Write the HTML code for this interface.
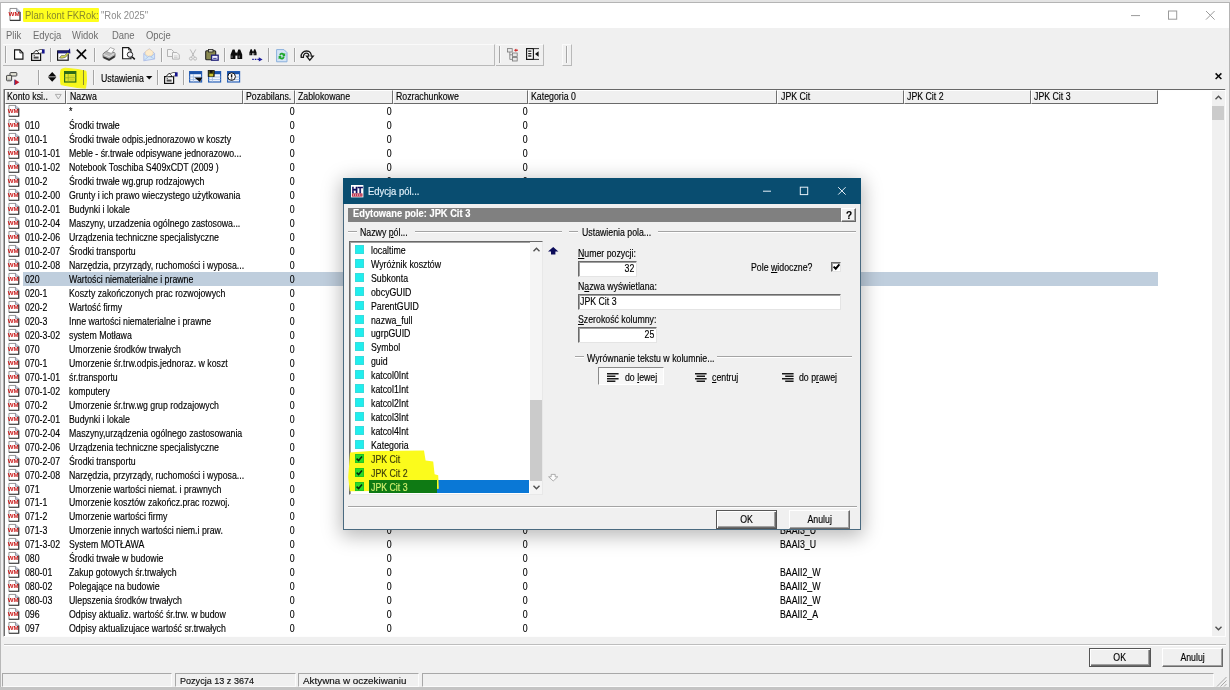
<!DOCTYPE html>
<html lang="pl"><head><meta charset="utf-8"><title>Plan kont FKRok: "Rok 2025"</title>
<style>
html,body{margin:0;padding:0}
body{width:1230px;height:690px;overflow:hidden;position:relative;background:#f0f0f0;font-family:"Liberation Sans",sans-serif;color:#111}
.b{position:absolute;box-sizing:border-box}
.t,.s,.m,.d{position:absolute;white-space:nowrap;height:14px;line-height:14px;transform-origin:0 50%}
.t{font-size:10.2px;transform:scaleX(.86);color:#000;-webkit-text-stroke:.15px currentColor}
.s{font-size:9.8px;transform:scaleX(.95);color:#111;-webkit-text-stroke:.15px currentColor}
.m{font-size:10px;transform:scaleX(.945);color:#6d6d6d}
.d{font-size:10.2px;transform:scaleX(.85)}
.r{transform-origin:100% 50%}
u{text-decoration:underline;text-underline-offset:1px}
svg{position:absolute;overflow:visible}
.sep{position:absolute;width:1px;background:#a6a6a6;box-shadow:1px 0 0 #f9f9f9}
</style></head><body><div id="root" style="position:absolute;left:0;top:0;width:1230px;height:690px;overflow:hidden;will-change:transform">

<div class="b" style="left:0.0px;top:0.0px;width:1230.0px;height:3.0px;background:#e4e4e4;border-bottom:1px solid #b4b4b4"></div>
<div class="b" style="left:0.0px;top:3.0px;width:1230.0px;height:25.0px;background:#fff"></div>
<div class="b" style="left:0.0px;top:2.0px;width:1.3px;height:688.0px;background:#b8b8b8"></div>
<div class="b" style="left:1228.8px;top:2.0px;width:1.2px;height:688.0px;background:#b4b4b4"></div>
<div class="b" style="left:0.0px;top:687.2px;width:1230.0px;height:2.8px;background:#c4c4c4"></div>
<svg style="left:8.5px;top:8px" width="11.5" height="13" viewBox="0 0 12 14" preserveAspectRatio="none"><path d="M1 .5h7l3.500 3.500v9.500h-10.500z" fill="#fff" stroke="#6a6a6a" stroke-width=".8"/><path d="M1 13.300h10.500v-9" fill="none" stroke="#3a3a3a" stroke-width="1.200"/><path d="M8 .5v3.500h3.500" fill="#c8d4e4" stroke="#667" stroke-width=".7"/><text x="5.400" y="9" font-family="Liberation Sans,sans-serif" font-weight="bold" font-size="6.200" fill="#c81414" text-anchor="middle" textLength="11.600" lengthAdjust="spacingAndGlyphs">WM</text></svg>
<div class="b" style="left:23.0px;top:8.0px;width:76.0px;height:14.0px;background:#ffff1e;border-radius:1px"></div>
<div class="m" style="left:25.0px;top:9.2px;color:#8a8a2a">Plan kont FKRok:</div>
<div class="m" style="left:101.0px;top:9.2px;color:#8c8c8c">&quot;Rok 2025&quot;</div>
<svg style="left:1125px;top:6px" width="100" height="18" viewBox="0 0 100 18"><g stroke="#9a9a9a" stroke-width="1" fill="none"><path d="M6 9.6h9"/><rect x="43.5" y="5" width="8.2" height="8.2"/><path d="M81 5l8.6 8.6M89.6 5l-8.6 8.6"/></g></svg>
<div class="m" style="left:6.0px;top:29.2px;">Plik</div>
<div class="m" style="left:33.0px;top:29.2px;">Edycja</div>
<div class="m" style="left:72.0px;top:29.2px;">Widok</div>
<div class="m" style="left:112.0px;top:29.2px;">Dane</div>
<div class="m" style="left:145.5px;top:29.2px;">Opcje</div>
<div class="b" style="left:3.0px;top:44.0px;width:491.5px;height:22.0px;border-top:1px solid #fafafa;border-bottom:1px solid #b9b9b9;border-right:1px solid #b9b9b9"></div>
<div class="b" style="left:495.5px;top:44.0px;width:48.0px;height:22.0px;border-top:1px solid #fafafa;border-bottom:1px solid #b9b9b9;border-right:1px solid #b9b9b9"></div>
<div class="sep" style="left:5.0px;top:46px;height:17px"></div>
<div class="sep" style="left:499.0px;top:46px;height:17px"></div>
<div class="sep" style="left:566.0px;top:46px;height:17px"></div>
<div class="b" style="left:562.0px;top:44.0px;width:10.4px;height:22.0px;border-top:1px solid #fafafa;border-left:1px solid #fafafa;border-bottom:1px solid #b9b9b9;border-right:1px solid #b9b9b9"></div>
<div class="sep" style="left:50.0px;top:48px;height:14px"></div>
<div class="sep" style="left:94.0px;top:48px;height:14px"></div>
<div class="sep" style="left:161.0px;top:48px;height:14px"></div>
<div class="sep" style="left:224.0px;top:48px;height:14px"></div>
<div class="sep" style="left:268.3px;top:48px;height:14px"></div>
<div class="sep" style="left:294.0px;top:48px;height:14px"></div>
<svg style="left:14.0px;top:49.0px" width="9.5" height="11" viewBox="0 0 10 11"><path d="M.6 .6h5.6l3.2 3.2v6.6h-8.8z" fill="#fff" stroke="#111" stroke-width="1.2"/><path d="M6.2 .6v3.2h3.2" fill="none" stroke="#111" stroke-width=".9"/></svg>
<svg style="left:31.0px;top:48.8px" width="14" height="12" viewBox="0 0 14 12"><rect x=".6" y="4.600" width="9" height="6.800" fill="#f6f6f6" stroke="#111" stroke-width="1.200"/><path d="M2 4.600l3.200-3.400 2.800 2.800" fill="#fff" stroke="#111" stroke-width="1"/><path d="M5.800 2l3.200-1.500h2.400v3.100l-2.800.9z" fill="#fff" stroke="#444" stroke-width=".8"/><rect x="11" y=".3" width="2.600" height="4.200" fill="#16168e"/><rect x="2.600" y="7.600" width="5" height="2" fill="#4a4a4a"/><rect x="2.600" y="6.200" width="1.400" height="1" fill="#4a4a4a"/></svg>
<svg style="left:57.0px;top:47.6px" width="13.5" height="13" viewBox="0 0 13.500 13"><rect x=".6" y="3" width="10.600" height="9.200" fill="#fff" stroke="#111" stroke-width="1.200"/><rect x=".6" y="2.600" width="10.600" height="2.800" fill="#1c1c76"/><path d="M2.400 10l2-2.600 3.200.2 3.400-3.600 1.200 1.200-3.800 4.200-3.200.8z" fill="#d2d850" stroke="#555" stroke-width=".6"/><path d="M9.800 4.200l3.200-4 .4 5.200z" fill="#16167a"/></svg>
<svg style="left:76.3px;top:49.3px" width="11" height="10.5" viewBox="0 0 11 10.5"><path d="M.8 .6l9.4 9.2M10 .6l-9.2 9.2" stroke="#0a0a0a" stroke-width="1.7" fill="none"/></svg>
<svg style="left:101.6px;top:47.2px" width="13.8" height="13.6" viewBox="0 0 14 14"><path d="M1 7.200c0-1 4.400-3.600 5.400-3.600l6.600 2.400c.6.400.6 4 0 4.600l-5 3c-.6.300-1 .3-1.600 0l-5-2.200c-.6-.400-.6-3.400-.4-4.200z" fill="#b8b8b8" stroke="#555" stroke-width=".7"/><path d="M4.800 5l3.600-4.400 4.400 1.600-3.200 4.400z" fill="#fff" stroke="#888" stroke-width=".7"/><path d="M1.200 9.600l6 2.600 5.800-3.600v2l-5 3c-.6.300-1 .3-1.600 0l-5-2.200z" fill="#2e2e2e"/><path d="M1.400 7.600l6 2.400 5.400-3.400" fill="none" stroke="#eee" stroke-width=".8"/></svg>
<svg style="left:122.0px;top:47.3px" width="13.4" height="13" viewBox="0 0 13.400 13"><path d="M.6 .6h6l2.400 2.400v8.800h-8.400z" fill="#fff" stroke="#1a1a1a" stroke-width="1.100"/><path d="M6.600 .6v2.400h2.400" fill="none" stroke="#1a1a1a" stroke-width=".8"/><circle cx="8" cy="7.600" r="2.700" fill="#f4f4f8" stroke="#222" stroke-width="1"/><path d="M10 9.700l2.800 2.700" stroke="#111" stroke-width="1.500"/></svg>
<svg style="left:142.8px;top:48.4px" width="12.4" height="13.2" viewBox="0 0 12.400 13.200"><path d="M.8 5.400l5.400-4.600 5.400 4.600v5.600l-10.800 1.800z" fill="#d4e8f8" stroke="#a8b8e4" stroke-width=".8"/><path d="M2.400 6.400v-2.800l3.800-2.600 3.800 2.600v2.800l-3.800 2.400z" fill="#fdeccc" stroke="#e8c8a0" stroke-width=".5"/><path d="M.8 12.600l5.400-4.600 5.400 3M.8 5.600l3.800 3.600M11.600 5.600l-3.600 3.400" fill="none" stroke="#a8c0e8" stroke-width=".8"/></svg>
<svg style="left:167.2px;top:49.2px" width="13" height="10.6" viewBox="0 0 13 10.6"><g fill="#f4f4f4" stroke="#b4b4b4" stroke-width="1"><path d="M.5 .5h4l2 2v5h-6z"/><path d="M5.5 3.5h4.4l2.4 2.4v4.2h-6.8z"/></g><path d="M7 7h3.6M7 8.6h3.6" stroke="#c4c4c4" stroke-width=".8"/></svg>
<svg style="left:188.8px;top:49.3px" width="8" height="11.6" viewBox="0 0 8 11.6"><g fill="none" stroke="#b9b9b9" stroke-width="1"><path d="M1.2 .4l4.4 8M6.8 .4l-4.4 8"/><circle cx="1.9" cy="9.6" r="1.5"/><circle cx="6.1" cy="9.6" r="1.5"/></g></svg>
<svg style="left:205.0px;top:49.2px" width="14.2" height="11.8" viewBox="0 0 14.2 11.8"><rect x=".7" y="1.8" width="10" height="9" rx="1" fill="#8a8a50" stroke="#222" stroke-width="1.1"/><rect x="3.4" y=".4" width="4.6" height="2.6" fill="#d8d8c0" stroke="#222" stroke-width=".8"/><rect x="6.600" y="6.200" width="6.600" height="5" fill="#eef" stroke="#22227a" stroke-width="1.300"/><path d="M8.200 9.400h3.400" stroke="#2a2a90" stroke-width=".9"/></svg>
<svg style="left:230.4px;top:49.3px" width="12.8" height="10.8" viewBox="0 0 12.8 10.8"><path d="M2.6 .6h2l.8 2.6v6.8h-4.8v-4.4zM8.2 .6h2l2 5v4.4h-4.8v-6.8z" fill="#0c0c0c"/><rect x="5" y="3.6" width="2.8" height="3" fill="#0c0c0c"/><path d="M2 6.6v2.4M9.2 6.6v2.4" stroke="#999" stroke-width=".8"/></svg>
<svg style="left:249.4px;top:49.3px" width="7.936" height="6.696000000000001" viewBox="0 0 12.8 10.8"><path d="M2.6 .6h2l.8 2.6v6.8h-4.8v-4.4zM8.2 .6h2l2 5v4.4h-4.8v-6.8z" fill="#0c0c0c"/><rect x="5" y="3.6" width="2.8" height="3" fill="#0c0c0c"/><path d="M2 6.6v2.4M9.2 6.6v2.4" stroke="#999" stroke-width=".8"/></svg>
<svg style="left:251.6px;top:56.6px" width="11" height="5" viewBox="0 0 11 5"><path d="M.2 2.4h7" stroke="#1a1a9a" stroke-width="1.1" stroke-dasharray="1.6 1"/><path d="M6.8 .2l3.8 2.2-3.8 2.2z" fill="#1a1a9a"/></svg>
<svg style="left:275.6px;top:48.8px" width="11.6" height="13.4" viewBox="0 0 11.6 13.4"><path d="M.6 .6h7.4l3 3v9.2h-10.4z" fill="#d4e4f6" stroke="#8ab0dc" stroke-width="1"/><path d="M3.2 6.2a2.8 2.8 0 0 1 5-1.4l1-.8v3.2h-3.2l1-1a1.5 1.5 0 0 0-2.4.4zM8.6 8a2.8 2.8 0 0 1-5 1.400l-1 .8v-3.200h3.200l-1 1a1.500 1.500 0 0 0 2.400-.4z" fill="#1ea82e"/></svg>
<svg style="left:299.8px;top:49.8px" width="14" height="10.8" viewBox="0 0 14 10.8"><path d="M1.200 7.400c-.600-4 2.200-6.400 5.400-6.400 3.400 0 5 2.600 4.600 5.200h2l-3.400 4-3.200-4h2.200c.4-1.600-.6-3-2.400-3-2 0-3.200 1.600-3 4.200z" fill="#fff" stroke="#1a1a1a" stroke-width="1.300"/></svg>
<svg style="left:506.8px;top:47.6px" width="11.4" height="13.6" viewBox="0 0 11.4 13.6"><g fill="#e8e8e8" stroke="#777" stroke-width=".8"><rect x=".6" y=".6" width="4.600" height="3.400"/><rect x="5.400" y="5" width="4.800" height="3.400"/><rect x="5.400" y="9.600" width="4.800" height="3.400"/></g><path d="M2.800 4v7.400h2.600M2.800 6.800h2.600" fill="none" stroke="#777" stroke-width=".8"/><path d="M7 2.200l2.200-1.600v1h1.600v1.400h-1.600v1z" fill="#d03030"/></svg>
<svg style="left:525.6px;top:48.4px" width="13.6" height="12" viewBox="0 0 13.600 12"><rect x=".6" y=".6" width="6.800" height="10.800" fill="#fff" stroke="#1a1a1a" stroke-width="1.200"/><path d="M7.400 .6h5.600M7.400 11.400h5.600" stroke="#333" stroke-width="1"/><path d="M2.200 3.200h3.200M2.200 5.600h3.200M2.200 8h3.200" stroke="#222" stroke-width="1.300"/><path d="M12.600 3.200l-3.600 2.800 3.600 2.800z" fill="#111"/></svg>
<div class="sep" style="left:38.4px;top:70px;height:15px"></div>
<div class="sep" style="left:83.2px;top:70px;height:15px"></div>
<div class="sep" style="left:92.8px;top:70px;height:15px"></div>
<div class="sep" style="left:157.4px;top:70px;height:15px"></div>
<div class="sep" style="left:183.2px;top:70px;height:15px"></div>
<svg style="left:58px;top:66px" width="32" height="24" viewBox="58 66 32 24"><path d="M61 69.500L65 68.200 77 69.400 86 71.200 86.500 80 85.600 88.200 78 87.600 66 85.600 61 84.600 60.200 76z" fill="#f6f61a" stroke="#f6f61a" stroke-width="1" stroke-linejoin="round"/></svg>
<div class="b" style="left:83.2px;top:70px;width:1px;height:15px;background:#8a8a30"></div>
<svg style="left:6.0px;top:71.6px" width="14" height="13" viewBox="0 0 14 13"><g fill="#e4e4d8" stroke="#444" stroke-width="1"><rect x="4" y=".6" width="6.800" height="3.400" rx=".6"/><rect x=".6" y="3.400" width="5" height="5.400" rx=".6"/><rect x="1.400" y="6.600" width="3.400" height="1.400" fill="#bbb" stroke="none"/></g><path d="M9 7.600l4.400 2.700-4.400 2.700z" fill="#c01830"/><path d="M8.600 7.600v5.400" stroke="#2a2a7a" stroke-width=".8"/></svg>
<svg style="left:47.5px;top:71.8px" width="8.4" height="9.8" viewBox="0 0 8.400 9.800"><path d="M4.200 0l4.200 4.500h-8.400zM0 5.300h8.400l-4.200 4.500z" fill="#0a0a0a"/></svg>
<svg style="left:64.0px;top:71.4px" width="12.4" height="11.6" viewBox="0 0 12.400 11.600"><rect x=".6" y=".6" width="11.200" height="10.400" fill="#e4e82c" stroke="#2a6a18" stroke-width="1.200"/><rect x=".6" y=".6" width="11.200" height="2.400" fill="#2a6a18"/><path d="M.6 6.800h11.200M4.200 3v8" stroke="#8aa424" stroke-width=".7"/><path d="M5.400 5h5M5.400 8.900h5" stroke="#bcc82c" stroke-width="1.200"/></svg>
<div class="t" style="left:101.4px;top:71.7px;">Ustawienia</div>
<svg style="left:146.0px;top:76.2px" width="6.4" height="3.6" viewBox="0 0 6.400 3.600"><path d="M0 0h6.400l-3.200 3.600z" fill="#0a0a0a"/></svg>
<svg style="left:164.0px;top:71.6px" width="14" height="12" viewBox="0 0 14 12"><rect x=".6" y="4.600" width="9" height="6.800" fill="#f6f6f6" stroke="#111" stroke-width="1.200"/><path d="M2 4.600l3.200-3.400 2.800 2.800" fill="#fff" stroke="#111" stroke-width="1"/><path d="M5.800 2l3.200-1.500h2.400v3.100l-2.800.9z" fill="#fff" stroke="#444" stroke-width=".8"/><rect x="11" y=".3" width="2.600" height="4.200" fill="#16168e"/><rect x="2.600" y="7.600" width="5" height="2" fill="#4a4a4a"/><rect x="2.600" y="6.200" width="1.400" height="1" fill="#4a4a4a"/></svg>
<svg style="left:189.4px;top:71.2px" width="13.2" height="11.6" viewBox="0 0 13.200 11.600"><rect x=".6" y=".6" width="12" height="10.400" fill="#f2f6fc" stroke="#2a62b8" stroke-width="1.200"/><rect x=".6" y=".6" width="12" height="2.600" fill="#1a52a8"/><path d="M.6 6h12M.6 8.600h12M4.400 3.200v7.800" stroke="#9ab8e0" stroke-width=".8"/><path d="M5.400 6.400h7.800l-2.200 4.600z" fill="#0a0a0a"/></svg>
<svg style="left:208.2px;top:71.2px" width="13.2" height="11.6" viewBox="0 0 13.200 11.600"><rect x=".6" y=".6" width="12" height="10.400" fill="#f2f6fc" stroke="#2a62b8" stroke-width="1.200"/><rect x=".6" y=".6" width="12" height="2.600" fill="#1a52a8"/><path d="M.6 6h12M.6 8.600h12M4.400 3.200v7.800" stroke="#9ab8e0" stroke-width=".8"/><rect x=".2" y="-.6" width="6" height="6" fill="#5a5a10" stroke="#111" stroke-width=".8"/><rect x="1.800" y="-.6" width="2.800" height="2.400" fill="#111"/><rect x="1.400" y="3" width="3.600" height="2.400" fill="#c8c030"/></svg>
<svg style="left:227.0px;top:71.2px" width="13.2" height="11.6" viewBox="0 0 13.200 11.600"><rect x=".6" y=".6" width="12" height="10.400" fill="#f2f6fc" stroke="#2a62b8" stroke-width="1.200"/><rect x=".6" y=".6" width="12" height="2.600" fill="#1a52a8"/><path d="M.6 6h12M.6 8.600h12M4.400 3.200v7.800" stroke="#9ab8e0" stroke-width=".8"/><circle cx="4.600" cy="5.600" r="3.800" fill="#fff" stroke="#111" stroke-width="1"/><path d="M4.600 3.200v3.200M4.600 7.400v1.200" stroke="#111" stroke-width="1.400"/></svg>
<svg style="left:1215.4px;top:73.0px" width="7" height="6.4" viewBox="0 0 7 6.400"><path d="M.6 .4l5.800 5.600M6.400 .4l-5.800 5.600" stroke="#0a0a0a" stroke-width="1.500"/></svg>
<div class="b" style="left:3.2px;top:88.5px;width:1223.2px;height:548.1px;background:#fff;border:.9px solid;border-color:#b0b0b0 #fdfdfd #fdfdfd #b0b0b0"></div>
<div class="b" style="left:4.1px;top:89.2px;width:1220.9px;height:546.5px;background:#fff;border-left:1px solid #6e6e6e;border-top:1.200px solid #686868"></div>
<div class="b" style="left:5.0px;top:90.3px;width:61.3px;height:13.6px;background:#f0f0f0;border-right:1.500px solid #707070;border-bottom:1.700px solid #6a6a6a;border-left:1px solid #fff;border-top:1px solid #fff"></div>
<div class="t" style="left:7.4px;top:90.4px;">Konto ksi..</div>
<div class="b" style="left:66.3px;top:90.3px;width:176.7px;height:13.6px;background:#f0f0f0;border-right:1.500px solid #707070;border-bottom:1.700px solid #6a6a6a;border-left:1px solid #fff;border-top:1px solid #fff"></div>
<div class="t" style="left:69.5px;top:90.4px;">Nazwa</div>
<div class="b" style="left:243.0px;top:90.3px;width:52.0px;height:13.6px;background:#f0f0f0;border-right:1.500px solid #707070;border-bottom:1.700px solid #6a6a6a;border-left:1px solid #fff;border-top:1px solid #fff"></div>
<div class="t" style="left:246.2px;top:90.4px;">Pozabilans.</div>
<div class="b" style="left:295.0px;top:90.3px;width:97.5px;height:13.6px;background:#f0f0f0;border-right:1.500px solid #707070;border-bottom:1.700px solid #6a6a6a;border-left:1px solid #fff;border-top:1px solid #fff"></div>
<div class="t" style="left:298.2px;top:90.4px;">Zablokowane</div>
<div class="b" style="left:392.5px;top:90.3px;width:135.5px;height:13.6px;background:#f0f0f0;border-right:1.500px solid #707070;border-bottom:1.700px solid #6a6a6a;border-left:1px solid #fff;border-top:1px solid #fff"></div>
<div class="t" style="left:395.7px;top:90.4px;">Rozrachunkowe</div>
<div class="b" style="left:528.0px;top:90.3px;width:249.3px;height:13.6px;background:#f0f0f0;border-right:1.500px solid #707070;border-bottom:1.700px solid #6a6a6a;border-left:1px solid #fff;border-top:1px solid #fff"></div>
<div class="t" style="left:531.2px;top:90.4px;">Kategoria 0</div>
<div class="b" style="left:777.3px;top:90.3px;width:126.7px;height:13.6px;background:#f0f0f0;border-right:1.500px solid #707070;border-bottom:1.700px solid #6a6a6a;border-left:1px solid #fff;border-top:1px solid #fff"></div>
<div class="t" style="left:780.5px;top:90.4px;">JPK Cit</div>
<div class="b" style="left:904.0px;top:90.3px;width:126.5px;height:13.6px;background:#f0f0f0;border-right:1.500px solid #707070;border-bottom:1.700px solid #6a6a6a;border-left:1px solid #fff;border-top:1px solid #fff"></div>
<div class="t" style="left:907.2px;top:90.4px;">JPK Cit 2</div>
<div class="b" style="left:1030.5px;top:90.3px;width:127.7px;height:13.6px;background:#f0f0f0;border-right:1.500px solid #707070;border-bottom:1.700px solid #6a6a6a;border-left:1px solid #fff;border-top:1px solid #fff"></div>
<div class="t" style="left:1033.7px;top:90.4px;">JPK Cit 3</div>
<svg style="left:55.0px;top:93.8px" width="6.6" height="5.4" viewBox="0 0 6.600 5.400"><path d="M.4 .4h5.800l-2.900 4.600z" fill="none" stroke="#9a9a9a" stroke-width=".8"/></svg>
<svg style="left:7.6px;top:105.4px" width="11.2" height="11.8" viewBox="0 0 12 14" preserveAspectRatio="none"><path d="M1 .5h7l3.500 3.500v9.500h-10.500z" fill="#fff" stroke="#6a6a6a" stroke-width=".8"/><path d="M1 13.300h10.500v-9" fill="none" stroke="#3a3a3a" stroke-width="1.200"/><path d="M8 .5v3.500h3.500" fill="#c8d4e4" stroke="#667" stroke-width=".7"/><text x="5.400" y="9" font-family="Liberation Sans,sans-serif" font-weight="bold" font-size="6.200" fill="#c81414" text-anchor="middle" textLength="11.600" lengthAdjust="spacingAndGlyphs">WM</text></svg>
<div class="t" style="left:69.0px;top:105.4px;">*</div>
<div class="t r" style="right:935.6px;top:105.4px;">0</div>
<div class="t r" style="right:838.4px;top:105.4px;">0</div>
<div class="t r" style="right:702.8px;top:105.4px;">0</div>
<svg style="left:7.6px;top:119.4px" width="11.2" height="11.8" viewBox="0 0 12 14" preserveAspectRatio="none"><path d="M1 .5h7l3.500 3.500v9.500h-10.500z" fill="#fff" stroke="#6a6a6a" stroke-width=".8"/><path d="M1 13.300h10.500v-9" fill="none" stroke="#3a3a3a" stroke-width="1.200"/><path d="M8 .5v3.500h3.500" fill="#c8d4e4" stroke="#667" stroke-width=".7"/><text x="5.400" y="9" font-family="Liberation Sans,sans-serif" font-weight="bold" font-size="6.200" fill="#c81414" text-anchor="middle" textLength="11.600" lengthAdjust="spacingAndGlyphs">WM</text></svg>
<div class="t" style="left:24.8px;top:119.4px;">010</div>
<div class="t" style="left:69.0px;top:119.4px;">Środki trwałe</div>
<div class="t r" style="right:935.6px;top:119.4px;">0</div>
<div class="t r" style="right:838.4px;top:119.4px;">0</div>
<div class="t r" style="right:702.8px;top:119.4px;">0</div>
<svg style="left:7.6px;top:133.3px" width="11.2" height="11.8" viewBox="0 0 12 14" preserveAspectRatio="none"><path d="M1 .5h7l3.500 3.500v9.500h-10.500z" fill="#fff" stroke="#6a6a6a" stroke-width=".8"/><path d="M1 13.300h10.500v-9" fill="none" stroke="#3a3a3a" stroke-width="1.200"/><path d="M8 .5v3.500h3.500" fill="#c8d4e4" stroke="#667" stroke-width=".7"/><text x="5.400" y="9" font-family="Liberation Sans,sans-serif" font-weight="bold" font-size="6.200" fill="#c81414" text-anchor="middle" textLength="11.600" lengthAdjust="spacingAndGlyphs">WM</text></svg>
<div class="t" style="left:24.8px;top:133.3px;">010-1</div>
<div class="t" style="left:69.0px;top:133.3px;">Środki trwałe odpis.jednorazowo w koszty</div>
<div class="t r" style="right:935.6px;top:133.3px;">0</div>
<div class="t r" style="right:838.4px;top:133.3px;">0</div>
<div class="t r" style="right:702.8px;top:133.3px;">0</div>
<svg style="left:7.6px;top:147.3px" width="11.2" height="11.8" viewBox="0 0 12 14" preserveAspectRatio="none"><path d="M1 .5h7l3.500 3.500v9.500h-10.500z" fill="#fff" stroke="#6a6a6a" stroke-width=".8"/><path d="M1 13.300h10.500v-9" fill="none" stroke="#3a3a3a" stroke-width="1.200"/><path d="M8 .5v3.500h3.500" fill="#c8d4e4" stroke="#667" stroke-width=".7"/><text x="5.400" y="9" font-family="Liberation Sans,sans-serif" font-weight="bold" font-size="6.200" fill="#c81414" text-anchor="middle" textLength="11.600" lengthAdjust="spacingAndGlyphs">WM</text></svg>
<div class="t" style="left:24.8px;top:147.3px;">010-1-01</div>
<div class="t" style="left:69.0px;top:147.3px;">Meble - śr.trwałe odpisywane jednorazowo...</div>
<div class="t r" style="right:935.6px;top:147.3px;">0</div>
<div class="t r" style="right:838.4px;top:147.3px;">0</div>
<div class="t r" style="right:702.8px;top:147.3px;">0</div>
<svg style="left:7.6px;top:161.3px" width="11.2" height="11.8" viewBox="0 0 12 14" preserveAspectRatio="none"><path d="M1 .5h7l3.500 3.500v9.500h-10.500z" fill="#fff" stroke="#6a6a6a" stroke-width=".8"/><path d="M1 13.300h10.500v-9" fill="none" stroke="#3a3a3a" stroke-width="1.200"/><path d="M8 .5v3.500h3.500" fill="#c8d4e4" stroke="#667" stroke-width=".7"/><text x="5.400" y="9" font-family="Liberation Sans,sans-serif" font-weight="bold" font-size="6.200" fill="#c81414" text-anchor="middle" textLength="11.600" lengthAdjust="spacingAndGlyphs">WM</text></svg>
<div class="t" style="left:24.8px;top:161.3px;">010-1-02</div>
<div class="t" style="left:69.0px;top:161.3px;">Notebook Toschiba S409xCDT (2009 )</div>
<div class="t r" style="right:935.6px;top:161.3px;">0</div>
<div class="t r" style="right:838.4px;top:161.3px;">0</div>
<div class="t r" style="right:702.8px;top:161.3px;">0</div>
<svg style="left:7.6px;top:175.2px" width="11.2" height="11.8" viewBox="0 0 12 14" preserveAspectRatio="none"><path d="M1 .5h7l3.500 3.500v9.500h-10.500z" fill="#fff" stroke="#6a6a6a" stroke-width=".8"/><path d="M1 13.300h10.500v-9" fill="none" stroke="#3a3a3a" stroke-width="1.200"/><path d="M8 .5v3.500h3.500" fill="#c8d4e4" stroke="#667" stroke-width=".7"/><text x="5.400" y="9" font-family="Liberation Sans,sans-serif" font-weight="bold" font-size="6.200" fill="#c81414" text-anchor="middle" textLength="11.600" lengthAdjust="spacingAndGlyphs">WM</text></svg>
<div class="t" style="left:24.8px;top:175.2px;">010-2</div>
<div class="t" style="left:69.0px;top:175.2px;">Środki trwałe wg.grup rodzajowych</div>
<div class="t r" style="right:935.6px;top:175.2px;">0</div>
<div class="t r" style="right:838.4px;top:175.2px;">0</div>
<div class="t r" style="right:702.8px;top:175.2px;">0</div>
<svg style="left:7.6px;top:189.2px" width="11.2" height="11.8" viewBox="0 0 12 14" preserveAspectRatio="none"><path d="M1 .5h7l3.500 3.500v9.500h-10.500z" fill="#fff" stroke="#6a6a6a" stroke-width=".8"/><path d="M1 13.300h10.500v-9" fill="none" stroke="#3a3a3a" stroke-width="1.200"/><path d="M8 .5v3.500h3.500" fill="#c8d4e4" stroke="#667" stroke-width=".7"/><text x="5.400" y="9" font-family="Liberation Sans,sans-serif" font-weight="bold" font-size="6.200" fill="#c81414" text-anchor="middle" textLength="11.600" lengthAdjust="spacingAndGlyphs">WM</text></svg>
<div class="t" style="left:24.8px;top:189.2px;">010-2-00</div>
<div class="t" style="left:69.0px;top:189.2px;">Grunty i ich prawo wieczystego użytkowania</div>
<div class="t r" style="right:935.6px;top:189.2px;">0</div>
<div class="t r" style="right:838.4px;top:189.2px;">0</div>
<div class="t r" style="right:702.8px;top:189.2px;">0</div>
<svg style="left:7.6px;top:203.2px" width="11.2" height="11.8" viewBox="0 0 12 14" preserveAspectRatio="none"><path d="M1 .5h7l3.500 3.500v9.500h-10.500z" fill="#fff" stroke="#6a6a6a" stroke-width=".8"/><path d="M1 13.300h10.500v-9" fill="none" stroke="#3a3a3a" stroke-width="1.200"/><path d="M8 .5v3.500h3.500" fill="#c8d4e4" stroke="#667" stroke-width=".7"/><text x="5.400" y="9" font-family="Liberation Sans,sans-serif" font-weight="bold" font-size="6.200" fill="#c81414" text-anchor="middle" textLength="11.600" lengthAdjust="spacingAndGlyphs">WM</text></svg>
<div class="t" style="left:24.8px;top:203.2px;">010-2-01</div>
<div class="t" style="left:69.0px;top:203.2px;">Budynki i lokale</div>
<div class="t r" style="right:935.6px;top:203.2px;">0</div>
<div class="t r" style="right:838.4px;top:203.2px;">0</div>
<div class="t r" style="right:702.8px;top:203.2px;">0</div>
<svg style="left:7.6px;top:217.1px" width="11.2" height="11.8" viewBox="0 0 12 14" preserveAspectRatio="none"><path d="M1 .5h7l3.500 3.500v9.500h-10.500z" fill="#fff" stroke="#6a6a6a" stroke-width=".8"/><path d="M1 13.300h10.500v-9" fill="none" stroke="#3a3a3a" stroke-width="1.200"/><path d="M8 .5v3.500h3.500" fill="#c8d4e4" stroke="#667" stroke-width=".7"/><text x="5.400" y="9" font-family="Liberation Sans,sans-serif" font-weight="bold" font-size="6.200" fill="#c81414" text-anchor="middle" textLength="11.600" lengthAdjust="spacingAndGlyphs">WM</text></svg>
<div class="t" style="left:24.8px;top:217.1px;">010-2-04</div>
<div class="t" style="left:69.0px;top:217.1px;">Maszyny, urzadzenia ogólnego zastosowa...</div>
<div class="t r" style="right:935.6px;top:217.1px;">0</div>
<div class="t r" style="right:838.4px;top:217.1px;">0</div>
<div class="t r" style="right:702.8px;top:217.1px;">0</div>
<svg style="left:7.6px;top:231.1px" width="11.2" height="11.8" viewBox="0 0 12 14" preserveAspectRatio="none"><path d="M1 .5h7l3.500 3.500v9.500h-10.500z" fill="#fff" stroke="#6a6a6a" stroke-width=".8"/><path d="M1 13.300h10.500v-9" fill="none" stroke="#3a3a3a" stroke-width="1.200"/><path d="M8 .5v3.500h3.500" fill="#c8d4e4" stroke="#667" stroke-width=".7"/><text x="5.400" y="9" font-family="Liberation Sans,sans-serif" font-weight="bold" font-size="6.200" fill="#c81414" text-anchor="middle" textLength="11.600" lengthAdjust="spacingAndGlyphs">WM</text></svg>
<div class="t" style="left:24.8px;top:231.1px;">010-2-06</div>
<div class="t" style="left:69.0px;top:231.1px;">Urządzenia techniczne specjalistyczne</div>
<div class="t r" style="right:935.6px;top:231.1px;">0</div>
<div class="t r" style="right:838.4px;top:231.1px;">0</div>
<div class="t r" style="right:702.8px;top:231.1px;">0</div>
<svg style="left:7.6px;top:245.1px" width="11.2" height="11.8" viewBox="0 0 12 14" preserveAspectRatio="none"><path d="M1 .5h7l3.500 3.500v9.500h-10.500z" fill="#fff" stroke="#6a6a6a" stroke-width=".8"/><path d="M1 13.300h10.500v-9" fill="none" stroke="#3a3a3a" stroke-width="1.200"/><path d="M8 .5v3.500h3.500" fill="#c8d4e4" stroke="#667" stroke-width=".7"/><text x="5.400" y="9" font-family="Liberation Sans,sans-serif" font-weight="bold" font-size="6.200" fill="#c81414" text-anchor="middle" textLength="11.600" lengthAdjust="spacingAndGlyphs">WM</text></svg>
<div class="t" style="left:24.8px;top:245.1px;">010-2-07</div>
<div class="t" style="left:69.0px;top:245.1px;">Środki transportu</div>
<div class="t r" style="right:935.6px;top:245.1px;">0</div>
<div class="t r" style="right:838.4px;top:245.1px;">0</div>
<div class="t r" style="right:702.8px;top:245.1px;">0</div>
<svg style="left:7.6px;top:259.0px" width="11.2" height="11.8" viewBox="0 0 12 14" preserveAspectRatio="none"><path d="M1 .5h7l3.500 3.500v9.500h-10.500z" fill="#fff" stroke="#6a6a6a" stroke-width=".8"/><path d="M1 13.300h10.500v-9" fill="none" stroke="#3a3a3a" stroke-width="1.200"/><path d="M8 .5v3.500h3.500" fill="#c8d4e4" stroke="#667" stroke-width=".7"/><text x="5.400" y="9" font-family="Liberation Sans,sans-serif" font-weight="bold" font-size="6.200" fill="#c81414" text-anchor="middle" textLength="11.600" lengthAdjust="spacingAndGlyphs">WM</text></svg>
<div class="t" style="left:24.8px;top:259.0px;">010-2-08</div>
<div class="t" style="left:69.0px;top:259.0px;">Narzędzia, przyrządy, ruchomości i wyposa...</div>
<div class="t r" style="right:935.6px;top:259.0px;">0</div>
<div class="t r" style="right:838.4px;top:259.0px;">0</div>
<div class="t r" style="right:702.8px;top:259.0px;">0</div>
<div class="b" style="left:23.0px;top:272.1px;width:1135.0px;height:13.6px;background:#bfcedd"></div>
<svg style="left:7.6px;top:273.0px" width="11.2" height="11.8" viewBox="0 0 12 14" preserveAspectRatio="none"><path d="M1 .5h7l3.500 3.500v9.500h-10.500z" fill="#fff" stroke="#6a6a6a" stroke-width=".8"/><path d="M1 13.300h10.500v-9" fill="none" stroke="#3a3a3a" stroke-width="1.200"/><path d="M8 .5v3.500h3.500" fill="#c8d4e4" stroke="#667" stroke-width=".7"/><text x="5.400" y="9" font-family="Liberation Sans,sans-serif" font-weight="bold" font-size="6.200" fill="#c81414" text-anchor="middle" textLength="11.600" lengthAdjust="spacingAndGlyphs">WM</text></svg>
<div class="t" style="left:24.8px;top:273.0px;">020</div>
<div class="t" style="left:69.0px;top:273.0px;">Wartości niematerialne i prawne</div>
<div class="t r" style="right:935.6px;top:273.0px;">0</div>
<div class="t r" style="right:838.4px;top:273.0px;">0</div>
<div class="t r" style="right:702.8px;top:273.0px;">0</div>
<svg style="left:7.6px;top:287.0px" width="11.2" height="11.8" viewBox="0 0 12 14" preserveAspectRatio="none"><path d="M1 .5h7l3.500 3.500v9.500h-10.500z" fill="#fff" stroke="#6a6a6a" stroke-width=".8"/><path d="M1 13.300h10.500v-9" fill="none" stroke="#3a3a3a" stroke-width="1.200"/><path d="M8 .5v3.500h3.500" fill="#c8d4e4" stroke="#667" stroke-width=".7"/><text x="5.400" y="9" font-family="Liberation Sans,sans-serif" font-weight="bold" font-size="6.200" fill="#c81414" text-anchor="middle" textLength="11.600" lengthAdjust="spacingAndGlyphs">WM</text></svg>
<div class="t" style="left:24.8px;top:287.0px;">020-1</div>
<div class="t" style="left:69.0px;top:287.0px;">Koszty zakończonych prac rozwojowych</div>
<div class="t r" style="right:935.6px;top:287.0px;">0</div>
<div class="t r" style="right:838.4px;top:287.0px;">0</div>
<div class="t r" style="right:702.8px;top:287.0px;">0</div>
<svg style="left:7.6px;top:300.9px" width="11.2" height="11.8" viewBox="0 0 12 14" preserveAspectRatio="none"><path d="M1 .5h7l3.500 3.500v9.500h-10.500z" fill="#fff" stroke="#6a6a6a" stroke-width=".8"/><path d="M1 13.300h10.500v-9" fill="none" stroke="#3a3a3a" stroke-width="1.200"/><path d="M8 .5v3.500h3.500" fill="#c8d4e4" stroke="#667" stroke-width=".7"/><text x="5.400" y="9" font-family="Liberation Sans,sans-serif" font-weight="bold" font-size="6.200" fill="#c81414" text-anchor="middle" textLength="11.600" lengthAdjust="spacingAndGlyphs">WM</text></svg>
<div class="t" style="left:24.8px;top:300.9px;">020-2</div>
<div class="t" style="left:69.0px;top:300.9px;">Wartość firmy</div>
<div class="t r" style="right:935.6px;top:300.9px;">0</div>
<div class="t r" style="right:838.4px;top:300.9px;">0</div>
<div class="t r" style="right:702.8px;top:300.9px;">0</div>
<svg style="left:7.6px;top:314.9px" width="11.2" height="11.8" viewBox="0 0 12 14" preserveAspectRatio="none"><path d="M1 .5h7l3.500 3.500v9.500h-10.500z" fill="#fff" stroke="#6a6a6a" stroke-width=".8"/><path d="M1 13.300h10.500v-9" fill="none" stroke="#3a3a3a" stroke-width="1.200"/><path d="M8 .5v3.500h3.500" fill="#c8d4e4" stroke="#667" stroke-width=".7"/><text x="5.400" y="9" font-family="Liberation Sans,sans-serif" font-weight="bold" font-size="6.200" fill="#c81414" text-anchor="middle" textLength="11.600" lengthAdjust="spacingAndGlyphs">WM</text></svg>
<div class="t" style="left:24.8px;top:314.9px;">020-3</div>
<div class="t" style="left:69.0px;top:314.9px;">Inne wartości niematerialne i prawne</div>
<div class="t r" style="right:935.6px;top:314.9px;">0</div>
<div class="t r" style="right:838.4px;top:314.9px;">0</div>
<div class="t r" style="right:702.8px;top:314.9px;">0</div>
<svg style="left:7.6px;top:328.9px" width="11.2" height="11.8" viewBox="0 0 12 14" preserveAspectRatio="none"><path d="M1 .5h7l3.500 3.500v9.500h-10.500z" fill="#fff" stroke="#6a6a6a" stroke-width=".8"/><path d="M1 13.300h10.500v-9" fill="none" stroke="#3a3a3a" stroke-width="1.200"/><path d="M8 .5v3.500h3.500" fill="#c8d4e4" stroke="#667" stroke-width=".7"/><text x="5.400" y="9" font-family="Liberation Sans,sans-serif" font-weight="bold" font-size="6.200" fill="#c81414" text-anchor="middle" textLength="11.600" lengthAdjust="spacingAndGlyphs">WM</text></svg>
<div class="t" style="left:24.8px;top:328.9px;">020-3-02</div>
<div class="t" style="left:69.0px;top:328.9px;">system Motława</div>
<div class="t r" style="right:935.6px;top:328.9px;">0</div>
<div class="t r" style="right:838.4px;top:328.9px;">0</div>
<div class="t r" style="right:702.8px;top:328.9px;">0</div>
<svg style="left:7.6px;top:342.8px" width="11.2" height="11.8" viewBox="0 0 12 14" preserveAspectRatio="none"><path d="M1 .5h7l3.500 3.500v9.500h-10.500z" fill="#fff" stroke="#6a6a6a" stroke-width=".8"/><path d="M1 13.300h10.500v-9" fill="none" stroke="#3a3a3a" stroke-width="1.200"/><path d="M8 .5v3.500h3.500" fill="#c8d4e4" stroke="#667" stroke-width=".7"/><text x="5.400" y="9" font-family="Liberation Sans,sans-serif" font-weight="bold" font-size="6.200" fill="#c81414" text-anchor="middle" textLength="11.600" lengthAdjust="spacingAndGlyphs">WM</text></svg>
<div class="t" style="left:24.8px;top:342.8px;">070</div>
<div class="t" style="left:69.0px;top:342.8px;">Umorzenie środków trwałych</div>
<div class="t r" style="right:935.6px;top:342.8px;">0</div>
<div class="t r" style="right:838.4px;top:342.8px;">0</div>
<div class="t r" style="right:702.8px;top:342.8px;">0</div>
<svg style="left:7.6px;top:356.8px" width="11.2" height="11.8" viewBox="0 0 12 14" preserveAspectRatio="none"><path d="M1 .5h7l3.500 3.500v9.500h-10.500z" fill="#fff" stroke="#6a6a6a" stroke-width=".8"/><path d="M1 13.300h10.500v-9" fill="none" stroke="#3a3a3a" stroke-width="1.200"/><path d="M8 .5v3.500h3.500" fill="#c8d4e4" stroke="#667" stroke-width=".7"/><text x="5.400" y="9" font-family="Liberation Sans,sans-serif" font-weight="bold" font-size="6.200" fill="#c81414" text-anchor="middle" textLength="11.600" lengthAdjust="spacingAndGlyphs">WM</text></svg>
<div class="t" style="left:24.8px;top:356.8px;">070-1</div>
<div class="t" style="left:69.0px;top:356.8px;">Umorzenie śr.trw.odpis.jednoraz. w koszt</div>
<div class="t r" style="right:935.6px;top:356.8px;">0</div>
<div class="t r" style="right:838.4px;top:356.8px;">0</div>
<div class="t r" style="right:702.8px;top:356.8px;">0</div>
<svg style="left:7.6px;top:370.8px" width="11.2" height="11.8" viewBox="0 0 12 14" preserveAspectRatio="none"><path d="M1 .5h7l3.500 3.500v9.500h-10.500z" fill="#fff" stroke="#6a6a6a" stroke-width=".8"/><path d="M1 13.300h10.500v-9" fill="none" stroke="#3a3a3a" stroke-width="1.200"/><path d="M8 .5v3.500h3.500" fill="#c8d4e4" stroke="#667" stroke-width=".7"/><text x="5.400" y="9" font-family="Liberation Sans,sans-serif" font-weight="bold" font-size="6.200" fill="#c81414" text-anchor="middle" textLength="11.600" lengthAdjust="spacingAndGlyphs">WM</text></svg>
<div class="t" style="left:24.8px;top:370.8px;">070-1-01</div>
<div class="t" style="left:69.0px;top:370.8px;">śr.transportu</div>
<div class="t r" style="right:935.6px;top:370.8px;">0</div>
<div class="t r" style="right:838.4px;top:370.8px;">0</div>
<div class="t r" style="right:702.8px;top:370.8px;">0</div>
<svg style="left:7.6px;top:384.7px" width="11.2" height="11.8" viewBox="0 0 12 14" preserveAspectRatio="none"><path d="M1 .5h7l3.500 3.500v9.500h-10.500z" fill="#fff" stroke="#6a6a6a" stroke-width=".8"/><path d="M1 13.300h10.500v-9" fill="none" stroke="#3a3a3a" stroke-width="1.200"/><path d="M8 .5v3.500h3.500" fill="#c8d4e4" stroke="#667" stroke-width=".7"/><text x="5.400" y="9" font-family="Liberation Sans,sans-serif" font-weight="bold" font-size="6.200" fill="#c81414" text-anchor="middle" textLength="11.600" lengthAdjust="spacingAndGlyphs">WM</text></svg>
<div class="t" style="left:24.8px;top:384.7px;">070-1-02</div>
<div class="t" style="left:69.0px;top:384.7px;">komputery</div>
<div class="t r" style="right:935.6px;top:384.7px;">0</div>
<div class="t r" style="right:838.4px;top:384.7px;">0</div>
<div class="t r" style="right:702.8px;top:384.7px;">0</div>
<svg style="left:7.6px;top:398.7px" width="11.2" height="11.8" viewBox="0 0 12 14" preserveAspectRatio="none"><path d="M1 .5h7l3.500 3.500v9.500h-10.500z" fill="#fff" stroke="#6a6a6a" stroke-width=".8"/><path d="M1 13.300h10.500v-9" fill="none" stroke="#3a3a3a" stroke-width="1.200"/><path d="M8 .5v3.500h3.500" fill="#c8d4e4" stroke="#667" stroke-width=".7"/><text x="5.400" y="9" font-family="Liberation Sans,sans-serif" font-weight="bold" font-size="6.200" fill="#c81414" text-anchor="middle" textLength="11.600" lengthAdjust="spacingAndGlyphs">WM</text></svg>
<div class="t" style="left:24.8px;top:398.7px;">070-2</div>
<div class="t" style="left:69.0px;top:398.7px;">Umorzenie śr.trw.wg grup rodzajowych</div>
<div class="t r" style="right:935.6px;top:398.7px;">0</div>
<div class="t r" style="right:838.4px;top:398.7px;">0</div>
<div class="t r" style="right:702.8px;top:398.7px;">0</div>
<svg style="left:7.6px;top:412.7px" width="11.2" height="11.8" viewBox="0 0 12 14" preserveAspectRatio="none"><path d="M1 .5h7l3.500 3.500v9.500h-10.500z" fill="#fff" stroke="#6a6a6a" stroke-width=".8"/><path d="M1 13.300h10.500v-9" fill="none" stroke="#3a3a3a" stroke-width="1.200"/><path d="M8 .5v3.500h3.500" fill="#c8d4e4" stroke="#667" stroke-width=".7"/><text x="5.400" y="9" font-family="Liberation Sans,sans-serif" font-weight="bold" font-size="6.200" fill="#c81414" text-anchor="middle" textLength="11.600" lengthAdjust="spacingAndGlyphs">WM</text></svg>
<div class="t" style="left:24.8px;top:412.7px;">070-2-01</div>
<div class="t" style="left:69.0px;top:412.7px;">Budynki i lokale</div>
<div class="t r" style="right:935.6px;top:412.7px;">0</div>
<div class="t r" style="right:838.4px;top:412.7px;">0</div>
<div class="t r" style="right:702.8px;top:412.7px;">0</div>
<svg style="left:7.6px;top:426.6px" width="11.2" height="11.8" viewBox="0 0 12 14" preserveAspectRatio="none"><path d="M1 .5h7l3.500 3.500v9.500h-10.500z" fill="#fff" stroke="#6a6a6a" stroke-width=".8"/><path d="M1 13.300h10.500v-9" fill="none" stroke="#3a3a3a" stroke-width="1.200"/><path d="M8 .5v3.500h3.500" fill="#c8d4e4" stroke="#667" stroke-width=".7"/><text x="5.400" y="9" font-family="Liberation Sans,sans-serif" font-weight="bold" font-size="6.200" fill="#c81414" text-anchor="middle" textLength="11.600" lengthAdjust="spacingAndGlyphs">WM</text></svg>
<div class="t" style="left:24.8px;top:426.6px;">070-2-04</div>
<div class="t" style="left:69.0px;top:426.6px;">Maszyny,urządzenia ogólnego zastosowania</div>
<div class="t r" style="right:935.6px;top:426.6px;">0</div>
<div class="t r" style="right:838.4px;top:426.6px;">0</div>
<div class="t r" style="right:702.8px;top:426.6px;">0</div>
<svg style="left:7.6px;top:440.6px" width="11.2" height="11.8" viewBox="0 0 12 14" preserveAspectRatio="none"><path d="M1 .5h7l3.500 3.500v9.500h-10.500z" fill="#fff" stroke="#6a6a6a" stroke-width=".8"/><path d="M1 13.300h10.500v-9" fill="none" stroke="#3a3a3a" stroke-width="1.200"/><path d="M8 .5v3.500h3.500" fill="#c8d4e4" stroke="#667" stroke-width=".7"/><text x="5.400" y="9" font-family="Liberation Sans,sans-serif" font-weight="bold" font-size="6.200" fill="#c81414" text-anchor="middle" textLength="11.600" lengthAdjust="spacingAndGlyphs">WM</text></svg>
<div class="t" style="left:24.8px;top:440.6px;">070-2-06</div>
<div class="t" style="left:69.0px;top:440.6px;">Urządzenia techniczne specjalistyczne</div>
<div class="t r" style="right:935.6px;top:440.6px;">0</div>
<div class="t r" style="right:838.4px;top:440.6px;">0</div>
<div class="t r" style="right:702.8px;top:440.6px;">0</div>
<svg style="left:7.6px;top:454.5px" width="11.2" height="11.8" viewBox="0 0 12 14" preserveAspectRatio="none"><path d="M1 .5h7l3.500 3.500v9.500h-10.500z" fill="#fff" stroke="#6a6a6a" stroke-width=".8"/><path d="M1 13.300h10.500v-9" fill="none" stroke="#3a3a3a" stroke-width="1.200"/><path d="M8 .5v3.500h3.500" fill="#c8d4e4" stroke="#667" stroke-width=".7"/><text x="5.400" y="9" font-family="Liberation Sans,sans-serif" font-weight="bold" font-size="6.200" fill="#c81414" text-anchor="middle" textLength="11.600" lengthAdjust="spacingAndGlyphs">WM</text></svg>
<div class="t" style="left:24.8px;top:454.5px;">070-2-07</div>
<div class="t" style="left:69.0px;top:454.5px;">Środki transportu</div>
<div class="t r" style="right:935.6px;top:454.5px;">0</div>
<div class="t r" style="right:838.4px;top:454.5px;">0</div>
<div class="t r" style="right:702.8px;top:454.5px;">0</div>
<svg style="left:7.6px;top:468.5px" width="11.2" height="11.8" viewBox="0 0 12 14" preserveAspectRatio="none"><path d="M1 .5h7l3.500 3.500v9.500h-10.500z" fill="#fff" stroke="#6a6a6a" stroke-width=".8"/><path d="M1 13.300h10.500v-9" fill="none" stroke="#3a3a3a" stroke-width="1.200"/><path d="M8 .5v3.500h3.500" fill="#c8d4e4" stroke="#667" stroke-width=".7"/><text x="5.400" y="9" font-family="Liberation Sans,sans-serif" font-weight="bold" font-size="6.200" fill="#c81414" text-anchor="middle" textLength="11.600" lengthAdjust="spacingAndGlyphs">WM</text></svg>
<div class="t" style="left:24.8px;top:468.5px;">070-2-08</div>
<div class="t" style="left:69.0px;top:468.5px;">Narzędzia, przyrządy, ruchomości i wyposa...</div>
<div class="t r" style="right:935.6px;top:468.5px;">0</div>
<div class="t r" style="right:838.4px;top:468.5px;">0</div>
<div class="t r" style="right:702.8px;top:468.5px;">0</div>
<svg style="left:7.6px;top:482.5px" width="11.2" height="11.8" viewBox="0 0 12 14" preserveAspectRatio="none"><path d="M1 .5h7l3.500 3.500v9.500h-10.500z" fill="#fff" stroke="#6a6a6a" stroke-width=".8"/><path d="M1 13.300h10.500v-9" fill="none" stroke="#3a3a3a" stroke-width="1.200"/><path d="M8 .5v3.500h3.500" fill="#c8d4e4" stroke="#667" stroke-width=".7"/><text x="5.400" y="9" font-family="Liberation Sans,sans-serif" font-weight="bold" font-size="6.200" fill="#c81414" text-anchor="middle" textLength="11.600" lengthAdjust="spacingAndGlyphs">WM</text></svg>
<div class="t" style="left:24.8px;top:482.5px;">071</div>
<div class="t" style="left:69.0px;top:482.5px;">Umorzenie wartości niemat. i prawnych</div>
<div class="t r" style="right:935.6px;top:482.5px;">0</div>
<div class="t r" style="right:838.4px;top:482.5px;">0</div>
<div class="t r" style="right:702.8px;top:482.5px;">0</div>
<svg style="left:7.6px;top:496.4px" width="11.2" height="11.8" viewBox="0 0 12 14" preserveAspectRatio="none"><path d="M1 .5h7l3.500 3.500v9.500h-10.500z" fill="#fff" stroke="#6a6a6a" stroke-width=".8"/><path d="M1 13.300h10.500v-9" fill="none" stroke="#3a3a3a" stroke-width="1.200"/><path d="M8 .5v3.500h3.500" fill="#c8d4e4" stroke="#667" stroke-width=".7"/><text x="5.400" y="9" font-family="Liberation Sans,sans-serif" font-weight="bold" font-size="6.200" fill="#c81414" text-anchor="middle" textLength="11.600" lengthAdjust="spacingAndGlyphs">WM</text></svg>
<div class="t" style="left:24.8px;top:496.4px;">071-1</div>
<div class="t" style="left:69.0px;top:496.4px;">Umorzenie kosztów zakończ.prac rozwoj.</div>
<div class="t r" style="right:935.6px;top:496.4px;">0</div>
<div class="t r" style="right:838.4px;top:496.4px;">0</div>
<div class="t r" style="right:702.8px;top:496.4px;">0</div>
<svg style="left:7.6px;top:510.4px" width="11.2" height="11.8" viewBox="0 0 12 14" preserveAspectRatio="none"><path d="M1 .5h7l3.500 3.500v9.500h-10.500z" fill="#fff" stroke="#6a6a6a" stroke-width=".8"/><path d="M1 13.300h10.500v-9" fill="none" stroke="#3a3a3a" stroke-width="1.200"/><path d="M8 .5v3.500h3.500" fill="#c8d4e4" stroke="#667" stroke-width=".7"/><text x="5.400" y="9" font-family="Liberation Sans,sans-serif" font-weight="bold" font-size="6.200" fill="#c81414" text-anchor="middle" textLength="11.600" lengthAdjust="spacingAndGlyphs">WM</text></svg>
<div class="t" style="left:24.8px;top:510.4px;">071-2</div>
<div class="t" style="left:69.0px;top:510.4px;">Umorzenie wartości firmy</div>
<div class="t r" style="right:935.6px;top:510.4px;">0</div>
<div class="t r" style="right:838.4px;top:510.4px;">0</div>
<div class="t r" style="right:702.8px;top:510.4px;">0</div>
<svg style="left:7.6px;top:524.4px" width="11.2" height="11.8" viewBox="0 0 12 14" preserveAspectRatio="none"><path d="M1 .5h7l3.500 3.500v9.500h-10.500z" fill="#fff" stroke="#6a6a6a" stroke-width=".8"/><path d="M1 13.300h10.500v-9" fill="none" stroke="#3a3a3a" stroke-width="1.200"/><path d="M8 .5v3.500h3.500" fill="#c8d4e4" stroke="#667" stroke-width=".7"/><text x="5.400" y="9" font-family="Liberation Sans,sans-serif" font-weight="bold" font-size="6.200" fill="#c81414" text-anchor="middle" textLength="11.600" lengthAdjust="spacingAndGlyphs">WM</text></svg>
<div class="t" style="left:24.8px;top:524.4px;">071-3</div>
<div class="t" style="left:69.0px;top:524.4px;">Umorzenie innych wartości niem.i praw.</div>
<div class="t r" style="right:935.6px;top:524.4px;">0</div>
<div class="t r" style="right:838.4px;top:524.4px;">0</div>
<div class="t r" style="right:702.8px;top:524.4px;">0</div>
<div class="t" style="left:780.0px;top:524.4px;">BAAI3_U</div>
<svg style="left:7.6px;top:538.3px" width="11.2" height="11.8" viewBox="0 0 12 14" preserveAspectRatio="none"><path d="M1 .5h7l3.500 3.500v9.500h-10.500z" fill="#fff" stroke="#6a6a6a" stroke-width=".8"/><path d="M1 13.300h10.500v-9" fill="none" stroke="#3a3a3a" stroke-width="1.200"/><path d="M8 .5v3.500h3.500" fill="#c8d4e4" stroke="#667" stroke-width=".7"/><text x="5.400" y="9" font-family="Liberation Sans,sans-serif" font-weight="bold" font-size="6.200" fill="#c81414" text-anchor="middle" textLength="11.600" lengthAdjust="spacingAndGlyphs">WM</text></svg>
<div class="t" style="left:24.8px;top:538.3px;">071-3-02</div>
<div class="t" style="left:69.0px;top:538.3px;">System MOTŁAWA</div>
<div class="t r" style="right:935.6px;top:538.3px;">0</div>
<div class="t r" style="right:838.4px;top:538.3px;">0</div>
<div class="t r" style="right:702.8px;top:538.3px;">0</div>
<div class="t" style="left:780.0px;top:538.3px;">BAAI3_U</div>
<svg style="left:7.6px;top:552.3px" width="11.2" height="11.8" viewBox="0 0 12 14" preserveAspectRatio="none"><path d="M1 .5h7l3.500 3.500v9.500h-10.500z" fill="#fff" stroke="#6a6a6a" stroke-width=".8"/><path d="M1 13.300h10.500v-9" fill="none" stroke="#3a3a3a" stroke-width="1.200"/><path d="M8 .5v3.500h3.500" fill="#c8d4e4" stroke="#667" stroke-width=".7"/><text x="5.400" y="9" font-family="Liberation Sans,sans-serif" font-weight="bold" font-size="6.200" fill="#c81414" text-anchor="middle" textLength="11.600" lengthAdjust="spacingAndGlyphs">WM</text></svg>
<div class="t" style="left:24.8px;top:552.3px;">080</div>
<div class="t" style="left:69.0px;top:552.3px;">Środki trwałe w budowie</div>
<div class="t r" style="right:935.6px;top:552.3px;">0</div>
<div class="t r" style="right:838.4px;top:552.3px;">0</div>
<div class="t r" style="right:702.8px;top:552.3px;">0</div>
<svg style="left:7.6px;top:566.3px" width="11.2" height="11.8" viewBox="0 0 12 14" preserveAspectRatio="none"><path d="M1 .5h7l3.500 3.500v9.500h-10.500z" fill="#fff" stroke="#6a6a6a" stroke-width=".8"/><path d="M1 13.300h10.500v-9" fill="none" stroke="#3a3a3a" stroke-width="1.200"/><path d="M8 .5v3.500h3.500" fill="#c8d4e4" stroke="#667" stroke-width=".7"/><text x="5.400" y="9" font-family="Liberation Sans,sans-serif" font-weight="bold" font-size="6.200" fill="#c81414" text-anchor="middle" textLength="11.600" lengthAdjust="spacingAndGlyphs">WM</text></svg>
<div class="t" style="left:24.8px;top:566.3px;">080-01</div>
<div class="t" style="left:69.0px;top:566.3px;">Zakup gotowych śr.trwałych</div>
<div class="t r" style="right:935.6px;top:566.3px;">0</div>
<div class="t r" style="right:838.4px;top:566.3px;">0</div>
<div class="t r" style="right:702.8px;top:566.3px;">0</div>
<div class="t" style="left:780.0px;top:566.3px;">BAAII2_W</div>
<svg style="left:7.6px;top:580.2px" width="11.2" height="11.8" viewBox="0 0 12 14" preserveAspectRatio="none"><path d="M1 .5h7l3.500 3.500v9.500h-10.500z" fill="#fff" stroke="#6a6a6a" stroke-width=".8"/><path d="M1 13.300h10.500v-9" fill="none" stroke="#3a3a3a" stroke-width="1.200"/><path d="M8 .5v3.500h3.500" fill="#c8d4e4" stroke="#667" stroke-width=".7"/><text x="5.400" y="9" font-family="Liberation Sans,sans-serif" font-weight="bold" font-size="6.200" fill="#c81414" text-anchor="middle" textLength="11.600" lengthAdjust="spacingAndGlyphs">WM</text></svg>
<div class="t" style="left:24.8px;top:580.2px;">080-02</div>
<div class="t" style="left:69.0px;top:580.2px;">Polegające na budowie</div>
<div class="t r" style="right:935.6px;top:580.2px;">0</div>
<div class="t r" style="right:838.4px;top:580.2px;">0</div>
<div class="t r" style="right:702.8px;top:580.2px;">0</div>
<div class="t" style="left:780.0px;top:580.2px;">BAAII2_W</div>
<svg style="left:7.6px;top:594.2px" width="11.2" height="11.8" viewBox="0 0 12 14" preserveAspectRatio="none"><path d="M1 .5h7l3.500 3.500v9.500h-10.500z" fill="#fff" stroke="#6a6a6a" stroke-width=".8"/><path d="M1 13.300h10.500v-9" fill="none" stroke="#3a3a3a" stroke-width="1.200"/><path d="M8 .5v3.500h3.500" fill="#c8d4e4" stroke="#667" stroke-width=".7"/><text x="5.400" y="9" font-family="Liberation Sans,sans-serif" font-weight="bold" font-size="6.200" fill="#c81414" text-anchor="middle" textLength="11.600" lengthAdjust="spacingAndGlyphs">WM</text></svg>
<div class="t" style="left:24.8px;top:594.2px;">080-03</div>
<div class="t" style="left:69.0px;top:594.2px;">Ulepszenia środków trwałych</div>
<div class="t r" style="right:935.6px;top:594.2px;">0</div>
<div class="t r" style="right:838.4px;top:594.2px;">0</div>
<div class="t r" style="right:702.8px;top:594.2px;">0</div>
<div class="t" style="left:780.0px;top:594.2px;">BAAII2_W</div>
<svg style="left:7.6px;top:608.2px" width="11.2" height="11.8" viewBox="0 0 12 14" preserveAspectRatio="none"><path d="M1 .5h7l3.500 3.500v9.500h-10.500z" fill="#fff" stroke="#6a6a6a" stroke-width=".8"/><path d="M1 13.300h10.500v-9" fill="none" stroke="#3a3a3a" stroke-width="1.200"/><path d="M8 .5v3.500h3.500" fill="#c8d4e4" stroke="#667" stroke-width=".7"/><text x="5.400" y="9" font-family="Liberation Sans,sans-serif" font-weight="bold" font-size="6.200" fill="#c81414" text-anchor="middle" textLength="11.600" lengthAdjust="spacingAndGlyphs">WM</text></svg>
<div class="t" style="left:24.8px;top:608.2px;">096</div>
<div class="t" style="left:69.0px;top:608.2px;">Odpisy aktualiz. wartość śr.trw. w budow</div>
<div class="t r" style="right:935.6px;top:608.2px;">0</div>
<div class="t r" style="right:838.4px;top:608.2px;">0</div>
<div class="t r" style="right:702.8px;top:608.2px;">0</div>
<div class="t" style="left:780.0px;top:608.2px;">BAAII2_A</div>
<svg style="left:7.6px;top:622.1px" width="11.2" height="11.8" viewBox="0 0 12 14" preserveAspectRatio="none"><path d="M1 .5h7l3.500 3.500v9.500h-10.500z" fill="#fff" stroke="#6a6a6a" stroke-width=".8"/><path d="M1 13.300h10.500v-9" fill="none" stroke="#3a3a3a" stroke-width="1.200"/><path d="M8 .5v3.500h3.500" fill="#c8d4e4" stroke="#667" stroke-width=".7"/><text x="5.400" y="9" font-family="Liberation Sans,sans-serif" font-weight="bold" font-size="6.200" fill="#c81414" text-anchor="middle" textLength="11.600" lengthAdjust="spacingAndGlyphs">WM</text></svg>
<div class="t" style="left:24.8px;top:622.1px;">097</div>
<div class="t" style="left:69.0px;top:622.1px;">Odpisy aktualizujace wartość sr.trwałych</div>
<div class="t r" style="right:935.6px;top:622.1px;">0</div>
<div class="t r" style="right:838.4px;top:622.1px;">0</div>
<div class="t r" style="right:702.8px;top:622.1px;">0</div>
<div class="b" style="left:1211.6px;top:90.6px;width:13.4px;height:545.1px;background:#f0f0f0"></div>
<div class="b" style="left:1212.2px;top:106.2px;width:11.8px;height:13.5px;background:#cbcbcb"></div>
<svg style="left:1214.8px;top:95.0px" width="7" height="5" viewBox="0 0 7 5"><path d="M.5 4.200l3-3 3 3" fill="none" stroke="#505050" stroke-width="1.400"/></svg>
<svg style="left:1214.8px;top:625.8px" width="7" height="5" viewBox="0 0 7 5"><path d="M.5 .8l3 3 3-3" fill="none" stroke="#505050" stroke-width="1.400"/></svg>
<div class="b" style="left:4.0px;top:644.0px;width:1222.0px;height:1.2px;background:#bdbdbd;box-shadow:0 1px 0 #fff"></div>
<div class="b" style="left:1089.4px;top:648.0px;width:61.4px;height:18.6px;background:#f0f0f0;border:1px solid #555;box-shadow:inset 1px 1px 0 #fff,inset -1px -1px 0 #6a6a6a,inset -2px -2px 0 #a0a0a0"></div>
<div class="t" style="left:1089.4px;width:61.4px;top:651.1px;text-align:center;transform-origin:50% 50%">OK</div>
<div class="b" style="left:1162.0px;top:648.0px;width:61.2px;height:18.6px;background:#f0f0f0;border:1px solid;border-color:#fff #6a6a6a #6a6a6a #fff;box-shadow:inset -1px -1px 0 #a0a0a0"></div>
<div class="t" style="left:1162.0px;width:61.2px;top:651.1px;text-align:center;transform-origin:50% 50%">Anuluj</div>
<div class="b" style="left:2.0px;top:672.6px;width:170.0px;height:14.2px;border:1px solid;border-color:#a8a8a8 #fcfcfc #fcfcfc #a8a8a8"></div>
<div class="b" style="left:175.4px;top:672.6px;width:120.2px;height:14.2px;border:1px solid;border-color:#a8a8a8 #fcfcfc #fcfcfc #a8a8a8"></div>
<div class="b" style="left:297.8px;top:672.6px;width:121.0px;height:14.2px;border:1px solid;border-color:#a8a8a8 #fcfcfc #fcfcfc #a8a8a8"></div>
<div class="b" style="left:422.0px;top:672.6px;width:792.0px;height:14.2px;border:1px solid;border-color:#a8a8a8 #fcfcfc #fcfcfc #a8a8a8"></div>
<div class="s" style="left:180.2px;top:673.6px;transform:scaleX(.925)">Pozycja 13 z 3674</div>
<div class="s" style="left:302.6px;top:673.6px;transform:scaleX(1.005)">Aktywna w oczekiwaniu</div>
<svg style="left:1216.0px;top:676.0px" width="11" height="11" viewBox="0 0 11 11"><path d="M10.500 1l-9.500 9.500M10.500 4.500l-6 6M10.500 8l-2.500 2.500" stroke="#a8a8a8" stroke-width="1"/></svg>
<div class="b" style="left:343.2px;top:178.2px;width:518.3px;height:351.4px;background:#f0f0f0;border:1px solid #4a6a80;box-shadow:0 4px 18px 2px rgba(0,0,0,.28)"></div>
<div class="b" style="left:343.2px;top:178.2px;width:518.3px;height:25.7px;background:#094d70"></div>
<svg style="left:351.0px;top:184.6px" width="12.4" height="12.4" viewBox="0 0 12.400 12.400"><rect width="12.400" height="12.400" fill="#fff"/><rect x=".9" y="8.400" width="10.600" height="3.200" fill="#b8203c"/><text x="6.200" y="8" font-family="Liberation Sans,sans-serif" font-weight="bold" font-size="9.400" fill="#0c0c5c" stroke="#0c0c5c" stroke-width=".5" text-anchor="middle" textLength="11" lengthAdjust="spacingAndGlyphs">HT</text><path d="M1.800 10h8.800" stroke="#fff" stroke-width="1.100" stroke-dasharray="1.300 .8"/></svg>
<div class="m" style="left:368.2px;top:183.8px;color:#e0f0fa;font-size:10.800px;transform:scaleX(.875);-webkit-text-stroke:.2px #e0f0fa">Edycja pól...</div>
<svg style="left:760.0px;top:184.0px" width="90" height="14" viewBox="0 0 90 14"><g stroke="#e6f0f8" stroke-width="1" fill="none"><path d="M3 7.200h8"/><rect x="40.300" y="3.200" width="7.400" height="7.400"/><path d="M78.200 3.200l7.400 7.400M85.600 3.200l-7.400 7.400"/></g></svg>
<div class="b" style="left:348.0px;top:208.0px;width:493.0px;height:14.3px;background:#808080"></div>
<div class="t" style="left:353.2px;top:207.1px;color:#fff;font-weight:bold;font-size:10px;transform:scaleX(.93)">Edytowane pole: JPK Cit 3</div>
<div class="b" style="left:841.0px;top:208.0px;width:15.4px;height:14.4px;background:#f2f2f2;border:1px solid;border-color:#fff #666 #666 #fff;box-shadow:inset -1px -1px 0 #a0a0a0"></div>
<div class="t" style="left:846.0px;top:208.6px;font-weight:bold;font-size:10px;transform:none">?</div>
<div class="b" style="left:348.0px;top:231.0px;width:8.8px;height:1.0px;background:#a4a4a4;box-shadow:0 1px 0 #fff"></div>
<div class="b" style="left:415.0px;top:231.0px;width:147.0px;height:1.0px;background:#a4a4a4;box-shadow:0 1px 0 #fff"></div>
<div class="t" style="left:359.8px;top:226.2px;">Nazwy <u>p</u>ól...</div>
<div class="b" style="left:569.0px;top:231.0px;width:9.4px;height:1.0px;background:#a4a4a4;box-shadow:0 1px 0 #fff"></div>
<div class="b" style="left:658.0px;top:231.0px;width:198.0px;height:1.0px;background:#a4a4a4;box-shadow:0 1px 0 #fff"></div>
<div class="t" style="left:582.3px;top:226.2px;">Ustawienia pola...</div>
<div class="b" style="left:349.0px;top:240.6px;width:194.0px;height:254.2px;background:#fff;border:1px solid;border-color:#6a6a6a #e8e8e8 #e8e8e8 #6a6a6a;box-shadow:inset 1px 1px 0 #a0a0a0"></div>
<div class="b" style="left:368.6px;top:480.2px;width:160.0px;height:13.0px;background:#0a78d6"></div>
<svg style="left:346px;top:446px" width="100" height="50" viewBox="0 0 100 50"><path d="M4 6.500L24 5l54-.6 1.600 10.200 7.600 1 1.400 12.600 3.600 1 .6 13.600-17 1.600-72 .8-1.600-14z" fill="#fbfb1c"/></svg>
<div class="b" style="left:368.6px;top:480.2px;width:68.8px;height:12.6px;background:#0f7a14"></div>
<div class="b" style="left:355.0px;top:244.8px;width:9.0px;height:9.0px;background:#20eeee;border:1px solid #38dcdc"></div>
<div class="t" style="left:371.0px;top:243.8px;">localtime</div>
<div class="b" style="left:355.0px;top:258.7px;width:9.0px;height:9.0px;background:#20eeee;border:1px solid #38dcdc"></div>
<div class="t" style="left:371.0px;top:257.7px;">Wyróżnik kosztów</div>
<div class="b" style="left:355.0px;top:272.7px;width:9.0px;height:9.0px;background:#20eeee;border:1px solid #38dcdc"></div>
<div class="t" style="left:371.0px;top:271.7px;">Subkonta</div>
<div class="b" style="left:355.0px;top:286.6px;width:9.0px;height:9.0px;background:#20eeee;border:1px solid #38dcdc"></div>
<div class="t" style="left:371.0px;top:285.6px;">obcyGUID</div>
<div class="b" style="left:355.0px;top:300.5px;width:9.0px;height:9.0px;background:#20eeee;border:1px solid #38dcdc"></div>
<div class="t" style="left:371.0px;top:299.5px;">ParentGUID</div>
<div class="b" style="left:355.0px;top:314.5px;width:9.0px;height:9.0px;background:#20eeee;border:1px solid #38dcdc"></div>
<div class="t" style="left:371.0px;top:313.5px;">nazwa_full</div>
<div class="b" style="left:355.0px;top:328.4px;width:9.0px;height:9.0px;background:#20eeee;border:1px solid #38dcdc"></div>
<div class="t" style="left:371.0px;top:327.4px;">ugrpGUID</div>
<div class="b" style="left:355.0px;top:342.3px;width:9.0px;height:9.0px;background:#20eeee;border:1px solid #38dcdc"></div>
<div class="t" style="left:371.0px;top:341.3px;">Symbol</div>
<div class="b" style="left:355.0px;top:356.3px;width:9.0px;height:9.0px;background:#20eeee;border:1px solid #38dcdc"></div>
<div class="t" style="left:371.0px;top:355.3px;">guid</div>
<div class="b" style="left:355.0px;top:370.2px;width:9.0px;height:9.0px;background:#20eeee;border:1px solid #38dcdc"></div>
<div class="t" style="left:371.0px;top:369.2px;">katcol0Int</div>
<div class="b" style="left:355.0px;top:384.1px;width:9.0px;height:9.0px;background:#20eeee;border:1px solid #38dcdc"></div>
<div class="t" style="left:371.0px;top:383.1px;">katcol1Int</div>
<div class="b" style="left:355.0px;top:398.1px;width:9.0px;height:9.0px;background:#20eeee;border:1px solid #38dcdc"></div>
<div class="t" style="left:371.0px;top:397.1px;">katcol2Int</div>
<div class="b" style="left:355.0px;top:412.0px;width:9.0px;height:9.0px;background:#20eeee;border:1px solid #38dcdc"></div>
<div class="t" style="left:371.0px;top:411.0px;">katcol3Int</div>
<div class="b" style="left:355.0px;top:426.0px;width:9.0px;height:9.0px;background:#20eeee;border:1px solid #38dcdc"></div>
<div class="t" style="left:371.0px;top:425.0px;">katcol4Int</div>
<div class="b" style="left:355.0px;top:439.9px;width:9.0px;height:9.0px;background:#20eeee;border:1px solid #38dcdc"></div>
<div class="t" style="left:371.0px;top:438.9px;">Kategoria</div>
<div class="b" style="left:355.0px;top:453.8px;width:9.0px;height:9.0px;background:#2adc28;border:1px solid #24c424"></div>
<svg style="left:356.4px;top:455.6px" width="6.6" height="5.6" viewBox="0 0 6.600 5.600"><path d="M.6 2.600l2 2 3.400-4" fill="none" stroke="#0a2a0a" stroke-width="1.500"/></svg>
<div class="t" style="left:371.0px;top:452.8px;color:#3a3a0a">JPK Cit</div>
<div class="b" style="left:355.0px;top:467.8px;width:9.0px;height:9.0px;background:#2adc28;border:1px solid #24c424"></div>
<svg style="left:356.4px;top:469.6px" width="6.6" height="5.6" viewBox="0 0 6.600 5.600"><path d="M.6 2.600l2 2 3.400-4" fill="none" stroke="#0a2a0a" stroke-width="1.500"/></svg>
<div class="t" style="left:371.0px;top:466.8px;color:#3a3a0a">JPK Cit 2</div>
<div class="b" style="left:355.0px;top:481.7px;width:9.0px;height:9.0px;background:#2adc28;border:1px solid #24c424"></div>
<svg style="left:356.4px;top:483.5px" width="6.6" height="5.6" viewBox="0 0 6.600 5.600"><path d="M.6 2.600l2 2 3.400-4" fill="none" stroke="#0a2a0a" stroke-width="1.500"/></svg>
<div class="t" style="left:371.0px;top:480.7px;color:#d4f070">JPK Cit 3</div>
<div class="b" style="left:530.0px;top:242.0px;width:12.0px;height:251.6px;background:#f5f5f5"></div>
<div class="b" style="left:530.0px;top:399.9px;width:11.9px;height:81.0px;background:#cbcbcb"></div>
<svg style="left:532.6px;top:247.0px" width="7" height="5" viewBox="0 0 7 5"><path d="M.5 4.200l3-3 3 3" fill="none" stroke="#505050" stroke-width="1.400"/></svg>
<svg style="left:532.6px;top:485.4px" width="7" height="5" viewBox="0 0 7 5"><path d="M.5 .8l3 3 3-3" fill="none" stroke="#505050" stroke-width="1.400"/></svg>
<svg style="left:548.0px;top:246.6px" width="10.4" height="7.4" viewBox="0 0 10.400 7.400"><path d="M5.200 0l5.200 4.600h-3v2.800h-4.400v-2.800h-3z" fill="#0c0c5a"/></svg>
<svg style="left:547.8px;top:473.8px" width="10.4" height="7.4" viewBox="0 0 10.400 7.400"><path d="M3.200 .4h4v2.400h2.600l-4.600 4.200-4.600-4.200h2.600z" fill="#fcfcfc" stroke="#9a9a9a" stroke-width=".8"/></svg>
<div class="t" style="left:578.0px;top:246.5px;"><u>N</u>umer pozycji:</div>
<div class="b" style="left:578.3px;top:260.8px;width:59.1px;height:16.0px;background:#fff;border:1px solid;border-color:#6a6a6a #e4e4e4 #e4e4e4 #6a6a6a;box-shadow:inset 1px 1px 0 #a0a0a0"></div>
<div class="t r" style="right:595.4px;top:262.4px;">32</div>
<div class="t" style="left:750.7px;top:260.7px;">Pole <u>w</u>idoczne?</div>
<div class="b" style="left:831.0px;top:262.1px;width:10.2px;height:10.1px;background:#fff;border:1px solid;border-color:#6a6a6a #e4e4e4 #e4e4e4 #6a6a6a;box-shadow:inset 1px 1px 0 #a0a0a0"></div>
<svg style="left:833.0px;top:264.2px" width="7" height="6" viewBox="0 0 6.400 5.600"><path d="M.5 2.400l2 2 3.400-4" fill="none" stroke="#000" stroke-width="1.800"/></svg>
<div class="t" style="left:578.0px;top:280.1px;">N<u>a</u>zwa wyświetlana:</div>
<div class="b" style="left:578.3px;top:293.6px;width:262.5px;height:16.4px;background:#fff;border:1px solid;border-color:#6a6a6a #e4e4e4 #e4e4e4 #6a6a6a;box-shadow:inset 1px 1px 0 #a0a0a0"></div>
<div class="t" style="left:580.4px;top:294.7px;">JPK Cit 3</div>
<div class="t" style="left:578.0px;top:313.1px;"><u>S</u>zerokość kolumny:</div>
<div class="b" style="left:578.3px;top:326.8px;width:79.1px;height:16.2px;background:#fff;border:1px solid;border-color:#6a6a6a #e4e4e4 #e4e4e4 #6a6a6a;box-shadow:inset 1px 1px 0 #a0a0a0"></div>
<div class="t r" style="right:575.4px;top:328.4px;">25</div>
<div class="b" style="left:575.0px;top:356.4px;width:9.0px;height:1.0px;background:#a4a4a4;box-shadow:0 1px 0 #fff"></div>
<div class="b" style="left:716.7px;top:356.4px;width:135.0px;height:1.0px;background:#a4a4a4;box-shadow:0 1px 0 #fff"></div>
<div class="t" style="left:587.3px;top:351.8px;">Wyrównanie tekstu w kolumnie...</div>
<div class="b" style="left:597.7px;top:367.3px;width:66.3px;height:17.9px;background:#f8f8f8;border:1px solid;border-color:#8a8a8a #fff #fff #8a8a8a"></div>
<svg style="left:607.4px;top:373.0px" width="11.6" height="9" viewBox="0 0 11.600 9"><rect x="0.0" y="0.0" width="11.6" height="1.500" fill="#1a1a1a"/><rect x="0.0" y="2.5" width="8.4" height="1.500" fill="#1a1a1a"/><rect x="0.0" y="5.0" width="11.6" height="1.500" fill="#1a1a1a"/><rect x="0.0" y="7.5" width="8.4" height="1.500" fill="#1a1a1a"/></svg>
<div class="t" style="left:625.0px;top:371.4px;">do <u>l</u>ewej</div>
<svg style="left:695.3px;top:373.0px" width="11.6" height="9" viewBox="0 0 11.600 9"><rect x="0.0" y="0.0" width="11.6" height="1.500" fill="#1a1a1a"/><rect x="1.6" y="2.5" width="8.4" height="1.500" fill="#1a1a1a"/><rect x="0.0" y="5.0" width="11.6" height="1.500" fill="#1a1a1a"/><rect x="1.6" y="7.5" width="8.4" height="1.500" fill="#1a1a1a"/></svg>
<div class="t" style="left:712.3px;top:371.4px;"><u>c</u>entruj</div>
<svg style="left:781.6px;top:373.0px" width="11.6" height="9" viewBox="0 0 11.600 9"><rect x="0.0" y="0.0" width="11.6" height="1.500" fill="#1a1a1a"/><rect x="3.2" y="2.5" width="8.4" height="1.500" fill="#1a1a1a"/><rect x="0.0" y="5.0" width="11.6" height="1.500" fill="#1a1a1a"/><rect x="3.2" y="7.5" width="8.4" height="1.500" fill="#1a1a1a"/></svg>
<div class="t" style="left:799.0px;top:371.4px;">do p<u>r</u>awej</div>
<div class="b" style="left:348.0px;top:506.0px;width:508.5px;height:1.0px;background:#a4a4a4;box-shadow:0 1px 0 #fff"></div>
<div class="b" style="left:715.8px;top:510.4px;width:61.0px;height:18.2px;background:#f0f0f0;border:1px solid #555;box-shadow:inset 1px 1px 0 #fff,inset -1px -1px 0 #6a6a6a,inset -2px -2px 0 #a0a0a0"></div>
<div class="t" style="left:715.8px;width:61.0px;top:513.3px;text-align:center;transform-origin:50% 50%">OK</div>
<div class="b" style="left:788.6px;top:510.4px;width:61.4px;height:18.2px;background:#f0f0f0;border:1px solid;border-color:#fff #6a6a6a #6a6a6a #fff;box-shadow:inset -1px -1px 0 #a0a0a0"></div>
<div class="t" style="left:788.6px;width:61.4px;top:513.3px;text-align:center;transform-origin:50% 50%">Anuluj</div>
</div></body></html>
